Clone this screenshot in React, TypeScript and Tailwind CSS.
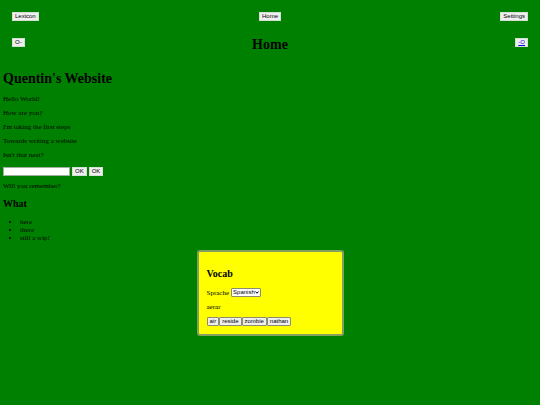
import { useState } from "react";
import type { ReactNode } from "react";

const greetings = [
  "Hello World!",
  "How are you?",
  "I'm taking the first steps",
  "Towards writing a website",
  "Isn't that neat?",
];

const answers = ["air", "reside", "zombie", "nathan"];

function Button({ children, outlined = false }: { children: ReactNode; outlined?: boolean }) {
  return (
    <button
      type="button"
      className={`h-[9px] border bg-[#efefef] px-[2px] font-['Liberation_Sans',sans-serif] text-[6px] leading-[7px] text-black ${
        outlined ? "rounded-[1px] border-[#8c8c70]" : "border-[#d4dfd4]"
      }`}
    >
      {children}
    </button>
  );
}

export default function App() {
  const [name, setName] = useState("");
  const [language, setLanguage] = useState("Spanish");

  return (
    <div className="min-h-screen bg-[#008000] font-['Liberation_Serif',serif] text-[7px] leading-[8px] text-black">
      <header className="px-3 pt-3">
        <nav className="grid grid-cols-3">
          <div className="flex justify-start">
            <Button>Lexicon</Button>
          </div>
          <div className="flex justify-center">
            <Button>Home</Button>
          </div>
          <div className="flex justify-end">
            <Button>Settings</Button>
          </div>
        </nav>
        <div className="mt-[17px] flex items-start justify-between">
          <Button>O-</Button>
          <h1 className="text-[14px] leading-[14px] font-bold">Home</h1>
          <Button>
            <a href="#" className="text-[#0000ee] underline">
              -O
            </a>
          </Button>
        </div>
      </header>

      <main className="px-[3px] pt-[19px]">
        <h1 className="text-[14px] leading-4 font-bold">Quentin's Website</h1>
        <div className="mt-2 flex flex-col gap-[6px]">
          {greetings.map((line) => (
            <p key={line}>{line}</p>
          ))}
        </div>
        <form className="mt-2 flex gap-[2px]" onSubmit={(e) => e.preventDefault()}>
          <input
            type="text"
            aria-label="Name"
            value={name}
            onChange={(e) => setName(e.target.value)}
            className="h-[9px] w-[67px] border border-[#a0b0a0] bg-white px-px font-['Liberation_Sans',sans-serif] text-[6px]"
          />
          <Button>OK</Button>
          <Button>OK</Button>
        </form>
        <p className="mt-[6px]">Will you remember?</p>
        <h2 className="mt-2 text-[10px] leading-3 font-bold">What</h2>
        <ul className="mt-2 list-disc pl-[17px]">
          <li>here</li>
          <li>there</li>
          <li>still a wip!</li>
        </ul>

        <section className="mx-auto mt-2 w-[147px] rounded-[3px] border-2 border-[#84a060] bg-[#ffff00] px-2 pt-4 pb-2">
          <h2 className="text-[10px] leading-3 font-bold">Vocab</h2>
          <div className="mt-2 flex items-center gap-[2px]">
            <label htmlFor="language">Sprache</label>
            <div className="relative flex">
              <select
                id="language"
                value={language}
                onChange={(e) => setLanguage(e.target.value)}
                className="h-[9px] w-[30px] appearance-none rounded-[1px] border border-[#8c8c70] bg-white pl-px font-['Liberation_Sans',sans-serif] text-[6px] leading-[7px]"
              >
                <option>Spanish</option>
                <option>French</option>
              </select>
              <svg
                viewBox="0 0 8 6"
                aria-hidden="true"
                className="pointer-events-none absolute top-[3px] right-[2px] h-[3px] w-1"
              >
                <path d="M1 1l3 3.5L7 1" fill="none" stroke="black" strokeWidth="2" />
              </svg>
            </div>
          </div>
          <p className="mt-[6px]">aerar</p>
          <div className="mt-[6px] flex">
            {answers.map((answer) => (
              <Button key={answer} outlined>
                {answer}
              </Button>
            ))}
          </div>
        </section>
      </main>
    </div>
  );
}
